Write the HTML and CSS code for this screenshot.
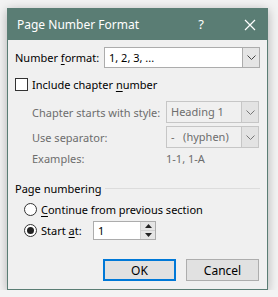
FILE: index.html
```html
<!DOCTYPE html>
<html lang="en">
<head>
  <meta charset="UTF-8" />
  <title>Page Number Format</title>
  <link rel="stylesheet" href="styles.css">
</head>
<body>

  <div class="dialog">
    <div class="titlebar">
      <span class="title">Page Number Format</span>
      <span class="help">?</span>
      <svg class="close" width="12" height="12" viewBox="0 0 12 12">
        <path d="M1 1 L11 11 M11 1 L1 11" stroke="#fff" stroke-width="1.2" fill="none" />
      </svg>
    </div>

    <div class="content">
      <div class="row format-row">
        <span class="label">Number <u>f</u>ormat:</span>
        <div class="select wide">
          <span class="value">1, 2, 3, ...</span>
          <span class="arrow"><svg width="9" height="5" viewBox="0 0 9 5"><path d="M0.5 0.5 L4.5 4.5 L8.5 0.5" stroke="#444" fill="none" /></svg></span>
        </div>
      </div>

      <label class="check-row">
        <span class="checkbox"></span>
        <span>Include chapter <u>n</u>umber</span>
      </label>

      <div class="chapter">
        <div class="row sub-row">
          <span class="label">Chapter starts with style:</span>
          <div class="select disabled">
            <span class="value">Heading 1</span>
            <span class="arrow"><svg width="9" height="5" viewBox="0 0 9 5"><path d="M0.5 0.5 L4.5 4.5 L8.5 0.5" stroke="#777" fill="none" /></svg></span>
          </div>
        </div>
        <div class="row sub-row">
          <span class="label">Use separator:</span>
          <div class="select disabled">
            <span class="value">-&nbsp;&nbsp;&nbsp;(hyphen)</span>
            <span class="arrow"><svg width="9" height="5" viewBox="0 0 9 5"><path d="M0.5 0.5 L4.5 4.5 L8.5 0.5" stroke="#777" fill="none" /></svg></span>
          </div>
        </div>
        <div class="row examples">
          <span class="label">Examples:</span>
          <span class="example-value">1-1, 1-A</span>
        </div>
      </div>

      <div class="group-title">
        <span>Page numbering</span>
        <span class="rule"></span>
      </div>

      <div class="radio-row">
        <span class="radio"></span>
        <span><u>C</u>ontinue from previous section</span>
      </div>
      <div class="radio-row">
        <span class="radio checked"></span>
        <span class="start-label">Start <u>a</u>t:</span>
        <div class="spin">
          <span class="spin-value">1</span>
          <span class="spin-btns">
            <span class="spin-btn"><svg width="7" height="4" viewBox="0 0 7 4"><path d="M0 4 L3.5 0 L7 4 Z" fill="#222" /></svg></span>
            <span class="spin-btn"><svg width="7" height="4" viewBox="0 0 7 4"><path d="M0 0 L3.5 4 L7 0 Z" fill="#222" /></svg></span>
          </span>
        </div>
      </div>

      <div class="buttons">
        <button class="btn default">OK</button>
        <button class="btn">Cancel</button>
      </div>
    </div>
  </div>

</body>
</html>
```

FILE: styles.css
```css
body {
  margin: 0;
  padding: 8px 0 0 7px;
  background: #f3f3f3;
  font-family: "Noto Sans", "Open Sans", Arial, sans-serif;
  font-size: 11px;
  line-height: 15px;
  color: #000;
  white-space: nowrap;
}

.dialog {
  width: 259px;
  height: 280px;
  border: 1px solid #5a7d74;
  background: #f0f0f0;
  box-shadow: 0 2px 10px rgba(0, 0, 0, 0.28);
  overflow: hidden;
}

.titlebar {
  height: 31px;
  background: #5a7d74;
  color: #fff;
  display: flex;
  align-items: center;
  padding-left: 9px;
}

.title {
  font-size: 12px;
  flex: 1;
}

.help {
  font-size: 13px;
  margin-right: 40px;
}

.close {
  margin-right: 11px;
}

.content {
  padding: 7px 7px 0 7px;
}

.row {
  display: flex;
  align-items: center;
}

.label {
  flex-shrink: 0;
}

u {
  text-decoration-thickness: 1px;
  text-underline-offset: 2px;
}

.format-row .label {
  width: 89px;
}

.select {
  display: flex;
  height: 19px;
  border: 1px solid #acacac;
  background: #fff;
  flex-shrink: 0;
}

.select.wide {
  width: 154px;
}

.select .value {
  flex: 1;
  padding-left: 4px;
  line-height: 19px;
}

.select .arrow {
  width: 16px;
  background: #e5e5e5;
  border-left: 1px solid #acacac;
  display: flex;
  align-items: center;
  justify-content: center;
}

.select.disabled {
  width: 91px;
  height: 20px;
  background: #f0f0f0;
  border-color: #c6c6c6;
  color: #6d6d6d;
}

.select.disabled .value {
  line-height: 20px;
}

.select.disabled .arrow {
  border-left-color: #c6c6c6;
  background: #e3e3e3;
}

.check-row {
  display: flex;
  align-items: center;
  margin-top: 9px;
  height: 14px;
}

.checkbox {
  width: 11px;
  height: 11px;
  border: 1px solid #333;
  background: #fff;
  margin-right: 4px;
}

.chapter {
  padding-left: 17px;
  margin-top: 10px;
  color: #6d6d6d;
}

.sub-row {
  height: 22px;
  margin-bottom: 3px;
}

.sub-row .label,
.examples .label {
  width: 134px;
}

.examples {
  height: 14px;
  margin-top: 1px;
}

.group-title {
  display: flex;
  align-items: center;
  margin-top: 16px;
}

.rule {
  flex: 1;
  height: 1px;
  background: #dcdcdc;
  margin-left: 4px;
}

.radio-row {
  display: flex;
  align-items: center;
  height: 19px;
  padding-left: 9px;
  margin-top: 2px;
}

.group-title + .radio-row {
  margin-top: 4px;
}

.radio {
  width: 11px;
  height: 11px;
  border: 1px solid #333;
  border-radius: 50%;
  background: #fff;
  margin-right: 4px;
  display: flex;
  align-items: center;
  justify-content: center;
}

.radio.checked::after {
  content: "";
  width: 7px;
  height: 7px;
  border-radius: 50%;
  background: #222;
}

.start-label {
  width: 52px;
}

.spin {
  display: flex;
  width: 61px;
  height: 17px;
  border: 1px solid #acacac;
  background: #fff;
}

.spin-value {
  flex: 1;
  padding-left: 4px;
  line-height: 17px;
}

.spin-btns {
  width: 14px;
  display: flex;
  flex-direction: column;
  border-left: 1px solid #d0d0d0;
}

.spin-btn {
  flex: 1;
  background: #e5e5e5;
  display: flex;
  align-items: center;
  justify-content: center;
}

.spin-btn + .spin-btn {
  border-top: 1px solid #d0d0d0;
}

.buttons {
  display: flex;
  justify-content: flex-end;
  gap: 10px;
  margin-top: 19px;
  padding-right: 1px;
}

.btn {
  width: 73px;
  height: 22px;
  font-family: inherit;
  font-size: 12px;
  background: #e1e1e1;
  border: 1px solid #adadad;
  color: #000;
  padding: 0;
}

.btn.default {
  border: 2px solid #0078d7;
}
```
